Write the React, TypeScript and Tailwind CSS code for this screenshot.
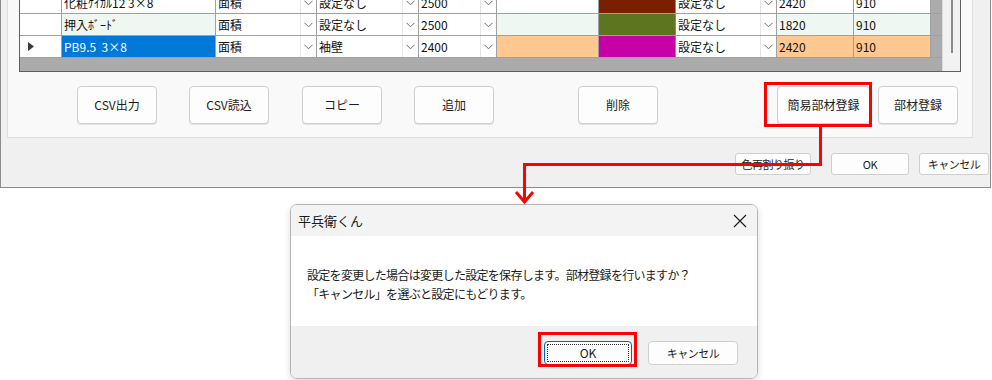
import React from "react";

const F = "font-['Noto_Sans_CJK_JP','Noto_Sans',sans-serif]";

function Chevron() {
  return (
    <svg width="9" height="6" viewBox="0 0 9 6">
      <polyline points="0.5,0.8 4.5,4.8 8.5,0.8" fill="none" stroke="#6b6b6b" strokeWidth="1" />
    </svg>
  );
}

type RowData = {
  rowBg: string;
  nameCls: string;
  name: string;
  type: string;
  setting: string;
  len: string;
  swatch: string;
  setting2: string;
  a: string;
  b: string;
  current?: boolean;
};

const rows: RowData[] = [
  {
    rowBg: "bg-white",
    nameCls: "bg-white text-[#111]",
    name: "化粧ｹｲｶﾙ12 3×8",
    type: "面積",
    setting: "設定なし",
    len: "2500",
    swatch: "bg-[#7a2000]",
    setting2: "設定なし",
    a: "2420",
    b: "910",
  },
  {
    rowBg: "bg-[#eef7f1]",
    nameCls: "bg-[#eef7f1] text-[#111]",
    name: "押入ﾎﾞｰﾄﾞ",
    type: "面積",
    setting: "設定なし",
    len: "2500",
    swatch: "bg-[#5e7520]",
    setting2: "設定なし",
    a: "1820",
    b: "910",
  },
  {
    rowBg: "bg-[#ffc891]",
    nameCls: "bg-[#0078d7] text-white",
    name: "PB9.5\u00a0\u00a03×8",
    type: "面積",
    setting: "袖壁",
    len: "2400",
    swatch: "bg-[#c600a6]",
    setting2: "設定なし",
    a: "2420",
    b: "910",
    current: true,
  },
];

function DD({ w, text }: { w: string; text: string }) {
  return (
    <div className={`${w} h-full flex border-r border-[#a0a0a0] bg-white`}>
      <div className="flex-1 flex items-center pl-[2px] whitespace-nowrap overflow-hidden">{text}</div>
      <div className="w-[16px] h-full flex items-center justify-center border-l border-[#e6e6e6]">
        <Chevron />
      </div>
    </div>
  );
}

function Row({ r }: { r: RowData }) {
  return (
    <div className="flex h-[22px] border-b border-[#a0a0a0] text-[12px] leading-none text-[#111]">
      <div className="w-[42px] h-full bg-white border-r border-[#a0a0a0] flex items-center pl-[8px]">
        {r.current && (
          <svg width="6" height="9" viewBox="0 0 6 9">
            <polygon points="0,0 6,4.5 0,9" fill="#3c3c3c" />
          </svg>
        )}
      </div>
      <div className={`w-[154px] h-full border-r border-[#a0a0a0] flex items-center pl-[2px] whitespace-pre ${r.nameCls}`}>
        {r.name}
      </div>
      <DD w="w-[101px]" text={r.type} />
      <DD w="w-[102px]" text={r.setting} />
      <DD w="w-[78px]" text={r.len} />
      <div className={`w-[102px] h-full border-r border-[#a0a0a0] ${r.rowBg}`} />
      <div className={`w-[77px] h-full border-r border-[#8a8a8a] ${r.swatch}`} />
      <DD w="w-[101px]" text={r.setting2} />
      <div className={`w-[77px] h-full border-r border-[#a0a0a0] flex items-center pl-[2px] ${r.rowBg}`}>{r.a}</div>
      <div className={`w-[77px] h-full border-r border-[#a0a0a0] flex items-center pl-[2px] ${r.rowBg}`}>{r.b}</div>
    </div>
  );
}

function Btn({ cls, children }: { cls: string; children: React.ReactNode }) {
  return (
    <div
      className={`${cls} h-[38px] rounded-[4px] border border-[#cfcfcf] bg-[#fdfdfd] shadow-[0_1px_0_#e2e2e2] flex items-center justify-center text-[12px] leading-none text-[#1b1b1b]`}
    >
      {children}
    </div>
  );
}

function SmallBtn({ cls, children }: { cls: string; children: React.ReactNode }) {
  return (
    <div
      className={`${cls} h-[22px] rounded-[3px] border border-[#cfcfcf] bg-[#fdfdfd] flex items-center justify-center text-[11px] leading-none text-[#1b1b1b] tracking-[-0.5px]`}
    >
      {children}
    </div>
  );
}

export default function App() {
  return (
    <div className={`relative w-[992px] h-[380px] bg-white overflow-hidden ${F}`}>
      {/* Main window */}
      <div className="w-[991px] h-[188px] bg-[#f0f0f0] border-l border-r border-b border-[#8c8c8c] flex flex-col">
        {/* Panel */}
        <div className="ml-[6px] w-[966px] h-[138px] bg-[#f9f9f9] border-l border-r border-b border-[#dedede] flex flex-col px-[11px]">
          {/* Grid */}
          <div className="h-[72px] bg-[#ababab] border-l border-r border-b border-[#5f5f5f] flex overflow-hidden">
            <div className="flex-1 overflow-hidden">
              <div className="-mt-[8px]">
                {rows.map((r, i) => (
                  <Row key={i} r={r} />
                ))}
              </div>
            </div>
            <div className="w-[18px] h-full bg-[#f2f2f2] border-l border-[#dcdcdc]">
              <div className="ml-[8px] w-[2px] h-[53px] bg-[#8a8a8a]" />
            </div>
          </div>
          {/* Buttons */}
          <div className="mt-[14px] flex">
            <Btn cls="ml-[58px] w-[80px]">CSV出力</Btn>
            <Btn cls="ml-[32px] w-[80px]">CSV読込</Btn>
            <Btn cls="ml-[33px] w-[80px]">コピー</Btn>
            <Btn cls="ml-[32px] w-[80px]">追加</Btn>
            <Btn cls="ml-[84px] w-[80px]">削除</Btn>
            <Btn cls="ml-[119px] w-[93px]">簡易部材登録</Btn>
            <Btn cls="ml-[8px] w-[80px]">部材登録</Btn>
          </div>
        </div>
        {/* Bottom buttons */}
        <div className="mt-[15px] flex">
          <SmallBtn cls="ml-[734px] w-[76px]">色再割り振り</SmallBtn>
          <SmallBtn cls="ml-[20px] w-[78px]">OK</SmallBtn>
          <SmallBtn cls="ml-[10px] w-[70px]">キャンセル</SmallBtn>
        </div>
      </div>

      {/* Dialog */}
      <div className="mt-[16px] ml-[290px] w-[468px] h-[175px] rounded-[7px] border border-[#b5b5b5] shadow-[0_2px_6px_rgba(0,0,0,0.15)] overflow-hidden flex flex-col">
        <div className="h-[31px] bg-[#f3f3f3] flex items-center justify-between pl-[7px] pr-[10px]">
          <span className="text-[13px] leading-none text-[#1a1a1a]">平兵衛くん</span>
          <svg width="14" height="14" viewBox="0 0 14 14">
            <path d="M1 1 L13 13 M13 1 L1 13" stroke="#1a1a1a" strokeWidth="1.1" fill="none" />
          </svg>
        </div>
        <div className="h-[90px] bg-white pt-[29px] pl-[16px] text-[12px] leading-[19px] tracking-[-0.7px] text-[#1a1a1a]">
          <div>設定を変更した場合は変更した設定を保存します。部材登録を行いますか？</div>
          <div>「キャンセル」を選ぶと設定にもどります。</div>
        </div>
        <div className="flex-1 bg-[#f0f0f0] flex justify-end items-start pt-[15px] pr-[19px] gap-[16px]">
          <div className="w-[88px] h-[24px] rounded-[4px] border border-[#0067c0] bg-[#fdfdfd] p-[2px]">
            <div className="w-full h-full border border-dotted border-[#333] flex items-center justify-center text-[12px] leading-none text-[#1a1a1a]">
              OK
            </div>
          </div>
          <div className="w-[90px] h-[24px] rounded-[4px] border border-[#cfcfcf] bg-[#fdfdfd] flex items-center justify-center text-[11px] leading-none tracking-[-0.5px] text-[#1a1a1a]">
            キャンセル
          </div>
        </div>
      </div>

      {/* Red annotations */}
      <svg className="absolute left-0 top-0 pointer-events-none" width="992" height="380" viewBox="0 0 992 380">
        <rect x="765.5" y="83.5" width="105" height="42" fill="none" stroke="#ff0000" strokeWidth="3" />
        <path d="M820.5 125 V164.5 H524.5 V202" fill="none" stroke="#ff0000" strokeWidth="3" />
        <path d="M516 192 L524.5 202 L533 192" fill="none" stroke="#ff0000" strokeWidth="3" />
        <rect x="539.5" y="333.5" width="96" height="32" fill="none" stroke="#ff0000" strokeWidth="3" />
      </svg>
    </div>
  );
}
